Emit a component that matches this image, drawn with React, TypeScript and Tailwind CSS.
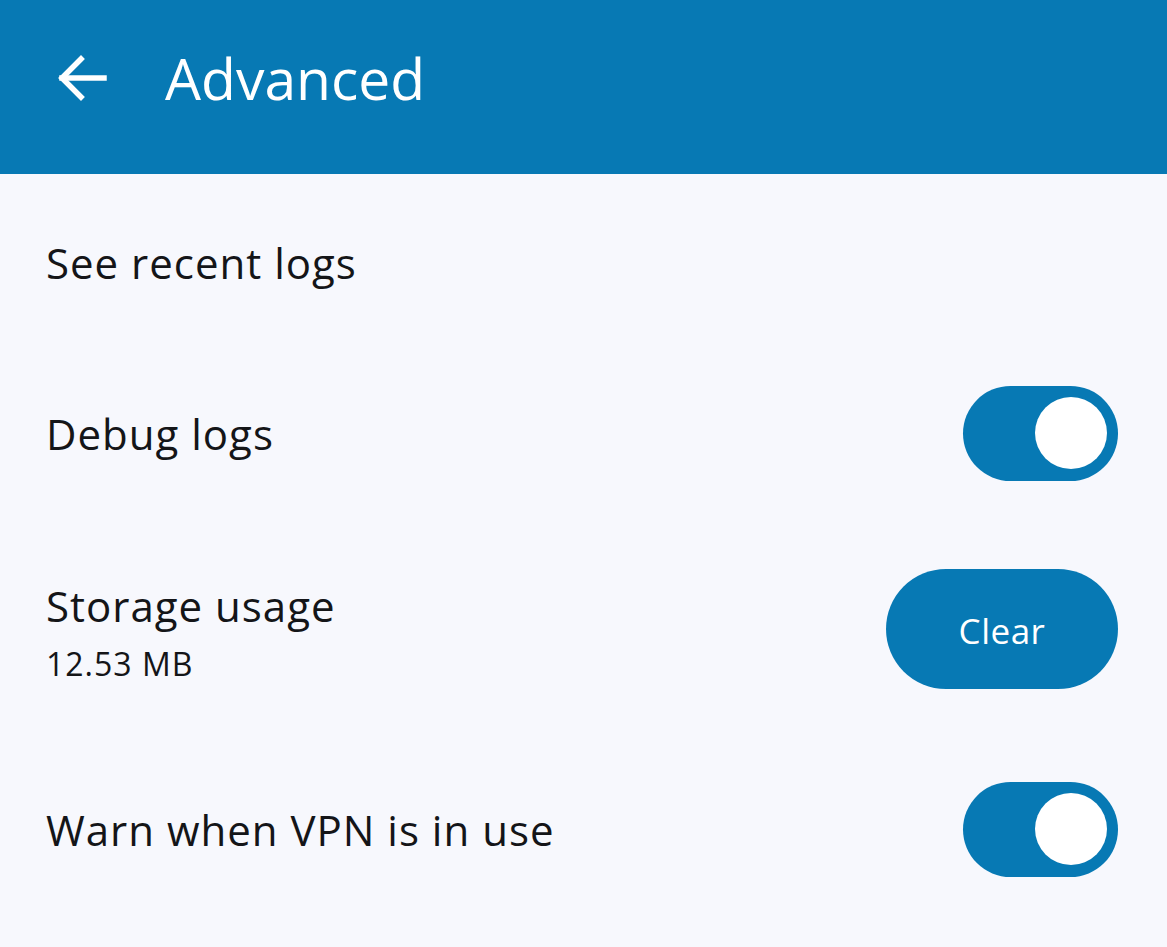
const font = { fontFamily: '"Open Sans", "Noto Sans", sans-serif' };

function Toggle() {
  return (
    <div className="flex h-[95px] w-[155px] items-center justify-end rounded-full bg-[#0779b4] pr-[11px]">
      <div className="h-[72px] w-[72px] rounded-full bg-white" />
    </div>
  );
}

export default function App() {
  return (
    <div className="min-h-[947px] w-full bg-[#f7f8fd] text-[#141518]" style={font}>
      <header className="flex h-[174px] items-center bg-[#0779b4] pb-[18px] pl-[57px] text-white">
        <svg width="50" height="46" viewBox="0 0 50 46" fill="none" stroke="white" strokeWidth="5.5" strokeLinecap="square">
          <path d="M47 23H5" />
          <path d="M24 4L5 23l19 19" />
        </svg>
        <h1 className="ml-[58px] text-[57px] leading-none">Advanced</h1>
      </header>

      <div className="flex flex-col px-[46px]">
        <div className="flex h-[176px] items-center">
          <span className="text-[42px] tracking-[1px]">See recent logs</span>
        </div>

        <div className="flex h-[166px] items-center justify-between pr-[3px]">
          <span className="text-[42px] tracking-[1px]">Debug logs</span>
          <Toggle />
        </div>

        <div className="flex h-[226px] items-center justify-between pr-[3px]">
          <div className="mt-[6px] flex flex-col">
            <span className="text-[42px] leading-[52px] tracking-[1px]">Storage usage</span>
            <span className="mt-[12px] text-[32px] leading-[40px] tracking-[1px]">12.53 MB</span>
          </div>
          <button className="flex h-[120px] w-[232px] items-center justify-center rounded-full bg-[#0779b4] pt-[5px] text-[35px] tracking-[0.5px] text-white">
            Clear
          </button>
        </div>

        <div className="flex h-[174px] items-center justify-between pr-[3px]">
          <span className="text-[42px] tracking-[1px]">Warn when VPN is in use</span>
          <Toggle />
        </div>
      </div>
    </div>
  );
}
